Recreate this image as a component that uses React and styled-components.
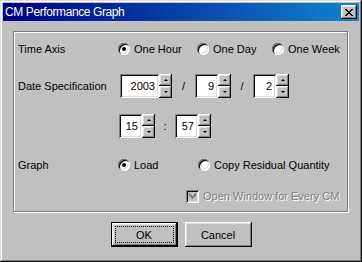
import styled, { createGlobalStyle } from "styled-components"

const Global = createGlobalStyle`
  html, body { margin: 0; padding: 0; background: #c0c0c0; }
  * { box-sizing: border-box; }
  body {
    font-family: "Liberation Sans", Arial, sans-serif;
    font-size: 11px;
    color: #000;
  }
`

export default function App(){
    return(
        <>
            <Global />
            <Window>
                <TitleBar>
                    <Title>CM Performance Graph</Title>
                    <CloseButton>
                        <svg width="8" height="7" viewBox="0 0 8 7">
                            <path fill="#000" d="M0 0h2v1H0zM6 0h2v1H6zM1 1h2v1H1zM5 1h2v1H5zM2 2h4v1H2zM3 3h2v1H3zM2 4h4v1H2zM1 5h2v1H1zM5 5h2v1H5zM0 6h2v1H0zM6 6h2v1H6z"/>
                        </svg>
                    </CloseButton>
                </TitleBar>
                <Body>
                    <GroupBox>
                        <Row $top={5}>
                            <Label>Time Axis</Label>
                            <Radio $w={79} checked label="One Hour" />
                            <Radio $w={75} label="One Day" />
                            <Radio label="One Week" />
                        </Row>
                        <Row $top={13}>
                            <Label>Date Specification</Label>
                            <Fields $shift={2}>
                                <Spin value="2003" $w={39} />
                                <Sep $w={23}>/</Sep>
                                <Spin value="9" $w={23} />
                                <Sep $w={22}>/</Sep>
                                <Spin value="2" $w={23} />
                            </Fields>
                        </Row>
                        <Row $top={16}>
                            <Label />
                            <Fields $shift={1}>
                                <Spin value="15" $w={23} />
                                <Sep $w={20}>:</Sep>
                                <Spin value="57" $w={23} />
                            </Fields>
                        </Row>
                        <Row $top={15}>
                            <Label>Graph</Label>
                            <Radio $w={80} checked label="Load" />
                            <Radio label="Copy Residual Quantity" />
                        </Row>
                        <Row $top={7}>
                            <CheckRow>
                                <CheckBox>
                                    <svg width="7" height="7" viewBox="0 0 7 7">
                                        <path fill="#808080" d="M6 0h1v3H6zM5 1h1v3H5zM4 2h1v3H4zM3 3h1v3H3zM2 2h1v3H2zM1 1h1v3H1zM0 0h1v3H0z"/>
                                    </svg>
                                </CheckBox>
                                <Disabled>Open Window for Every CM</Disabled>
                            </CheckRow>
                        </Row>
                    </GroupBox>
                    <ButtonRow>
                        <Button $default>OK</Button>
                        <Button>Cancel</Button>
                    </ButtonRow>
                </Body>
            </Window>
        </>
    )
}

function Radio({checked, label, $w}){
    return(
        <Option $w={$w}>
            <RadioCircle>{checked && <Dot />}</RadioCircle>
            <span>{label}</span>
        </Option>
    )
}

function Spin({value, $w}){
    return(
        <SpinWrap>
            <TextBox $w={$w}>{value}</TextBox>
            <SpinButtons>
                <SpinButton><Arrow $up /></SpinButton>
                <SpinButton><Arrow /></SpinButton>
            </SpinButtons>
        </SpinWrap>
    )
}

const Window = styled.div`
    width: 362px;
    height: 262px;
    padding: 3px;
    background: #c0c0c0;
    display: flex;
    flex-direction: column;
    box-shadow: inset -1px -1px #0a0a0a, inset 1px 1px #dfdfdf,
        inset -2px -2px #808080, inset 2px 2px #ffffff;
`
const TitleBar = styled.div`
    height: 18px;
    display: flex;
    align-items: center;
    justify-content: space-between;
    padding: 0 2px;
    background: linear-gradient(to right, #000080, #1084d0);
    color: #ffffff;
`
const Title = styled.span`
    font-size: 12px;
    letter-spacing: -0.4px;
`
const CloseButton = styled.div`
    width: 16px;
    height: 14px;
    display: flex;
    align-items: center;
    justify-content: center;
    background: #c0c0c0;
    box-shadow: inset -1px -1px #0a0a0a, inset 1px 1px #ffffff,
        inset -2px -2px #808080, inset 2px 2px #dfdfdf;
`
const Body = styled.div`
    padding: 10px 10px 0 10px;
    display: flex;
    flex-direction: column;
`
const GroupBox = styled.div`
    width: 335px;
    height: 181px;
    border: 1px solid #808080;
    box-shadow: 1px 1px 0 #ffffff, inset 1px 1px 0 #ffffff;
    padding: 0 0 0 4px;
    display: flex;
    flex-direction: column;
`
const Row = styled.div`
    height: 24px;
    margin-top: ${p => p.$top}px;
    display: flex;
    align-items: center;
`
const Label = styled.div`
    width: 100px;
    flex-shrink: 0;
`
const Option = styled.div`
    width: ${p => (p.$w ? `${p.$w}px` : "auto")};
    display: flex;
    align-items: center;
    gap: 4px;
`
const RadioCircle = styled.span`
    width: 12px;
    height: 12px;
    border-radius: 50%;
    background: #ffffff;
    display: flex;
    align-items: center;
    justify-content: center;
    box-shadow: inset 1px 1px #808080, inset -1px -1px #ffffff,
        inset 2px 2px #0a0a0a, inset -2px -2px #dfdfdf;
`
const Dot = styled.span`
    width: 4px;
    height: 4px;
    border-radius: 50%;
    background: #000;
`
const Fields = styled.div`
    display: flex;
    align-items: center;
    margin-left: ${p => p.$shift}px;
`
const SpinWrap = styled.div`
    display: flex;
    height: 24px;
`
const TextBox = styled.div`
    width: ${p => p.$w}px;
    height: 24px;
    background: #ffffff;
    text-align: right;
    padding: 0 4px 0 0;
    line-height: 24px;
    box-shadow: inset 1px 1px #808080, inset -1px -1px #ffffff,
        inset 2px 2px #0a0a0a, inset -2px -2px #dfdfdf;
`
const SpinButtons = styled.div`
    width: 13px;
    display: flex;
    flex-direction: column;
`
const SpinButton = styled.div`
    flex: 1;
    display: flex;
    align-items: center;
    justify-content: center;
    background: #c0c0c0;
    box-shadow: inset -1px -1px #0a0a0a, inset 1px 1px #ffffff,
        inset -2px -2px #808080, inset 2px 2px #dfdfdf;
`
const Arrow = styled.span`
    width: 0;
    height: 0;
    border-left: 2px solid transparent;
    border-right: 2px solid transparent;
    ${p => (p.$up ? "border-bottom: 2px solid #000;" : "border-top: 2px solid #000;")}
`
const Sep = styled.div`
    width: ${p => p.$w}px;
    text-align: center;
`
const CheckRow = styled.div`
    margin-left: 168px;
    display: flex;
    align-items: center;
    gap: 4px;
`
const CheckBox = styled.span`
    width: 13px;
    height: 13px;
    background: #c0c0c0;
    display: flex;
    align-items: center;
    justify-content: center;
    box-shadow: inset 1px 1px #808080, inset -1px -1px #ffffff,
        inset 2px 2px #0a0a0a, inset -2px -2px #dfdfdf;
`
const Disabled = styled.span`
    color: #808080;
    text-shadow: 1px 1px 0 #ffffff;
`
const ButtonRow = styled.div`
    margin-top: 10px;
    display: flex;
    justify-content: center;
    gap: 7px;
`
const Button = styled.div`
    position: relative;
    width: 67px;
    height: 25px;
    display: flex;
    align-items: center;
    justify-content: center;
    background: #c0c0c0;
    ${p => p.$default ? `
        border: 1px solid #000;
        box-shadow: inset -1px -1px #0a0a0a, inset 1px 1px #ffffff,
            inset -2px -2px #808080, inset 2px 2px #dfdfdf;
        &::after{
            content: "";
            position: absolute;
            inset: 3px;
            border: 1px dotted #000;
        }
    ` : `
        box-shadow: inset -1px -1px #0a0a0a, inset 1px 1px #ffffff,
            inset -2px -2px #808080, inset 2px 2px #dfdfdf;
    `}
`
